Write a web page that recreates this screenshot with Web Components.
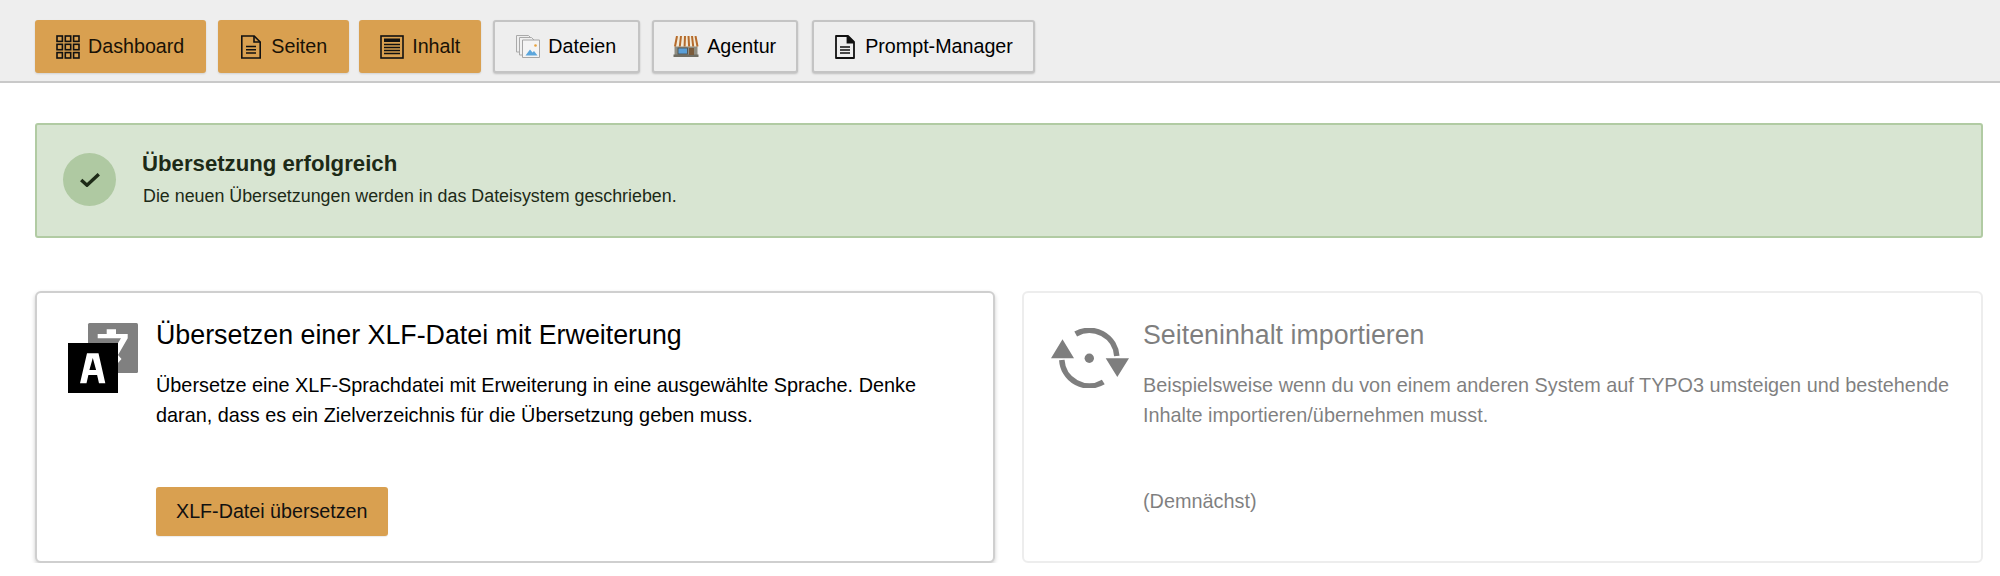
<!DOCTYPE html>
<html lang="de">
<head>
<meta charset="utf-8">
<title>Übersetzung</title>
<style>
html, body { margin: 0; background: #fff; }
body { font-family: "Liberation Sans", Arial, sans-serif; color: #000; }
</style>
</head>
<body>
<app-shell>
  <top-bar>
    <nav-button active>
      <svg slot="icon" width="24" height="24" viewBox="0 0 24 24" fill="none" stroke="#111" stroke-width="1.6">
        <rect x="1" y="1" width="5.4" height="5.4"/><rect x="9.3" y="1" width="5.4" height="5.4"/><rect x="17.6" y="1" width="5.4" height="5.4"/>
        <rect x="1" y="9.3" width="5.4" height="5.4"/><rect x="9.3" y="9.3" width="5.4" height="5.4"/><rect x="17.6" y="9.3" width="5.4" height="5.4"/>
        <rect x="1" y="17.6" width="5.4" height="5.4"/><rect x="9.3" y="17.6" width="5.4" height="5.4"/><rect x="17.6" y="17.6" width="5.4" height="5.4"/>
      </svg>
      Dashboard
    </nav-button>
    <nav-button active>
      <svg slot="icon" width="22" height="24" viewBox="0 0 22 24" fill="none" stroke="#111" stroke-width="1.6">
        <path d="M1.8 1h12.4l6 6v16H1.800z"/><path d="M14 1v6h6.200"/><path d="M6 11.500h10M6 14.800h10M6 18h10"/>
      </svg>
      Seiten
    </nav-button>
    <nav-button active style="margin-left:-2px;padding-right:19px">
      <svg slot="icon" width="24" height="24" viewBox="0 0 24 24" fill="none" stroke="#111" stroke-width="1.6">
        <rect x="1" y="1" width="22" height="22"/><rect x="4" y="3.500" width="16" height="3.500" fill="#111" stroke="none"/>
        <path d="M4 9.500h16M4 12.500h16M4 15.500h16M4 18.500h16" stroke-width="1.300"/>
      </svg>
      Inhalt
    </nav-button>
    <nav-button style="padding-right:22px">
      <svg slot="icon" width="24" height="23" viewBox="0 0 24 23" style="margin-left:2px">
        <path d="M.5.500h12l2.500 2.500v14H.5z" fill="#eee" stroke="#aaa"/>
        <path d="M3.500 2.500h12l2.500 2.500v15H3.500z" fill="#f1f1f1" stroke="#aaa"/>
        <path d="M6.500 5h17v17.500h-17z" fill="#f4f4f4" stroke="#a5a5a5"/>
        <path d="M9.500 20.500l4.500-6 2.500 3 1.500-1.500 3.500 4.500z" fill="#5ca6dc"/>
        <circle cx="19.500" cy="10.500" r="1.300" fill="#e8a33d"/>
      </svg>
      Dateien
    </nav-button>
    <nav-button>
      <svg slot="icon" width="26" height="21" viewBox="0 0 26 21">
        <rect x="1.500" y="9" width="23" height="10" fill="#8f8d82"/>
        <rect x="0.500" y="18.500" width="25" height="2.500" fill="#6f6d63"/>
        <rect x="5" y="12" width="9.500" height="6" fill="#5a9fd8" stroke="#4a4a44" stroke-width=".8"/>
        <rect x="16" y="12" width="5" height="7" fill="#7a5a3a"/>
        <path d="M3 0h20l2.500 10.500h-25z" fill="#f2ead8"/>
        <path d="M4 0L2 10.500M8 0L6.800 10.500M12 0l-.4 10.500M15.500 0l.6 10.500M19 0l1.200 10.500M22.500 0l2 10.500" stroke="#b56a2c" stroke-width="2"/>
      </svg>
      Agentur
    </nav-button>
    <nav-button style="margin-left:2px">
      <svg slot="icon" width="20" height="24" viewBox="0 0 20 24" fill="none" stroke="#111" stroke-width="1.800">
        <path d="M1 1h12l6 6v16H1z" stroke-linejoin="round"/><path d="M12.500 1v6.500H19" fill="#111"/><path d="M5 12h10M5 15h10M5 18h10" stroke-width="1.500"/>
      </svg>
      Prompt-Manager
    </nav-button>
  </top-bar>

  <success-alert heading="Übersetzung erfolgreich">
    Die neuen Übersetzungen werden in das Dateisystem geschrieben.
  </success-alert>

  <card-grid>
    <action-card heading="Übersetzen einer XLF-Datei mit Erweiterung">
      <svg slot="icon" width="70" height="70" viewBox="0 0 70 70">
        <rect x="20" y="0" width="50" height="50" rx="1.500" fill="#808080"/>
        <path d="M38.700 6.300H48V11h11.700v4.300L50 32l3.500 4-3.500 4V20l3-4.700H29.700V11h9z" fill="#fff"/>
        <rect x="0" y="20" width="50" height="50" fill="#000"/>
        <path d="M12 60.300L19 30.300h11.500l6.800 30H31L29.100 52H20.400l-1.900 8.300zM21.400 47h6.700L24.800 35z" fill="#fff" fill-rule="evenodd"/>
      </svg>
      Übersetze eine XLF-Sprachdatei mit Erweiterung in eine ausgewählte Sprache. Denke daran, dass es ein Zielverzeichnis für die Übersetzung geben muss.
      <main-button slot="action">XLF-Datei übersetzen</main-button>
    </action-card>
    <action-card heading="Seiteninhalt importieren" disabled>
      <svg slot="icon" width="78" height="60" viewBox="0 0 78 60" style="margin-top:5px">
        <g fill="none" stroke="#000" stroke-width="5.500">
          <path d="M24.700 6A27.500 27.500 0 0 1 65.800 28"/>
          <path d="M52.300 54A27.500 27.500 0 0 1 10.800 32"/>
        </g>
        <path d="M0 30.300L11.500 11.300 23 30.300zM54.700 30.300H78L66.300 49z" fill="#000"/>
        <circle cx="38.300" cy="30.300" r="4.700" fill="#000"/>
      </svg>
      Beispielsweise wenn du von einem anderen System auf TYPO3 umsteigen und bestehende Inhalte importieren/übernehmen musst.
      <span slot="action" class="soon">(Demnächst)</span>
    </action-card>
  </card-grid>
</app-shell>

<script>
class AppShell extends HTMLElement {
  constructor() {
    super()
    this.attachShadow({ mode: 'open' }).innerHTML = `<style>
      :host { display: block; }
    </style><slot></slot>`
  }
}

class TopBar extends HTMLElement {
  constructor() {
    super()
    this.attachShadow({ mode: 'open' }).innerHTML = `<style>
      :host {
        display: flex;
        gap: 12px;
        height: 81px;
        padding: 0 35px;
        align-items: flex-start;
        background: #eee;
        border-bottom: 2px solid #c9c9c9;
      }
      ::slotted(nav-button) { margin-top: 20px; }
    </style><slot></slot>`
  }
}

class NavButton extends HTMLElement {
  constructor() {
    super()
    this.attachShadow({ mode: 'open' }).innerHTML = `<style>
      :host {
        display: flex;
        align-items: center;
        gap: 8px;
        height: 53px;
        box-sizing: border-box;
        padding: 0 20px 0 19px;
        font-size: 19.700px;
        color: #000;
        background: #eee;
        border: 2px solid #c4c4c4;
        border-radius: 3px;
        box-shadow: 0 1px 2px rgba(0,0,0,.2);
        white-space: nowrap;
      }
      :host([active]) {
        background: #d9a050;
        border-color: #d9a050;
        box-shadow: 0 1px 2px rgba(0,0,0,.12);
        color: #1a1206;
      }
      .icon { display: flex; justify-content: center; min-width: 24px; }
      ::slotted(svg) { flex: none; }
    </style><span class="icon"><slot name="icon"></slot></span><slot></slot>`
  }
}

class SuccessAlert extends HTMLElement {
  constructor() {
    super()
    this.attachShadow({ mode: 'open' }).innerHTML = `<style>
      :host {
        display: flex;
        align-items: center;
        gap: 27px;
        height: 115px;
        box-sizing: border-box;
        margin: 40px 17px 0 35px;
        padding: 0 26px;
        background: #d8e5d2;
        border: 2px solid #b1cba3;
        border-radius: 3px;
        color: #1d2a17;
      }
      .badge {
        width: 53px; height: 53px; border-radius: 50%;
        background: #afc9a2;
        display: flex; align-items: center; justify-content: center;
        flex: none;
        margin-top: -2px;
      }
      h2 { margin: 0 0 9px -1px; font-size: 22.200px; line-height: 26px; font-weight: bold; }
      p { margin: 0; font-size: 17.850px; line-height: 20px; }
      .body { margin-top: -4px; }
    </style>
    <span class="badge"><svg width="20" height="14" viewBox="0 0 20 14" fill="none" stroke="#1d2a17" stroke-width="3.400"><path d="M1.200 7L7 12.200 18.800 1.200"/></svg></span>
    <div class="body"><h2></h2><p><slot></slot></p></div>`
    this.shadowRoot.querySelector('h2').textContent = this.getAttribute('heading')
  }
}

class CardGrid extends HTMLElement {
  constructor() {
    super()
    this.attachShadow({ mode: 'open' }).innerHTML = `<style>
      :host {
        display: grid;
        grid-template-columns: 960px 961px;
        gap: 27px;
        margin: 53px 17px 0 35px;
      }
    </style><slot></slot>`
  }
}

class ActionCard extends HTMLElement {
  constructor() {
    super()
    this.attachShadow({ mode: 'open' }).innerHTML = `<style>
      :host {
        display: flex;
        height: 272px;
        box-sizing: border-box;
        padding: 30px 30px 0 31px;
        gap: 18px;
        background: #fff;
        border: 2px solid #cfcfcf;
        border-radius: 6px;
        box-shadow: 0 2px 4px rgba(0,0,0,.2);
      }
      :host([disabled]) { opacity: .5; box-shadow: none; border-color: #ddd; }
      .icon { flex: none; width: 70px; display: flex; justify-content: center; align-items: flex-start; }
      ::slotted(svg) { flex: none; }
      .main { flex: 1; min-width: 0; }
      h3 { margin: -3px 0 20px; font-size: 26.800px; line-height: 30px; font-weight: normal; }
      p { margin: 0; font-size: 19.850px; line-height: 30px; height: 117px; }
      ::slotted(.soon) { font-size: 19.850px; line-height: 24px; display: block; padding-top: 2px; }
    </style>
    <div class="icon"><slot name="icon"></slot></div>
    <div class="main"><h3></h3><p><slot></slot></p><div><slot name="action"></slot></div></div>`
    this.shadowRoot.querySelector('h3').textContent = this.getAttribute('heading')
  }
}

class MainButton extends HTMLElement {
  constructor() {
    super()
    this.attachShadow({ mode: 'open' }).innerHTML = `<style>
      :host {
        display: inline-flex;
        align-items: center;
        height: 49px;
        padding: 0 20px;
        font-size: 19.700px;
        color: #111;
        background: #d9a050;
        border-radius: 3px;
        box-shadow: 0 1px 1px rgba(0,0,0,.08);
      }
    </style><slot></slot>`
  }
}

customElements.define('app-shell', AppShell)
customElements.define('top-bar', TopBar)
customElements.define('nav-button', NavButton)
customElements.define('success-alert', SuccessAlert)
customElements.define('card-grid', CardGrid)
customElements.define('action-card', ActionCard)
customElements.define('main-button', MainButton)
</script>
</body>
</html>
